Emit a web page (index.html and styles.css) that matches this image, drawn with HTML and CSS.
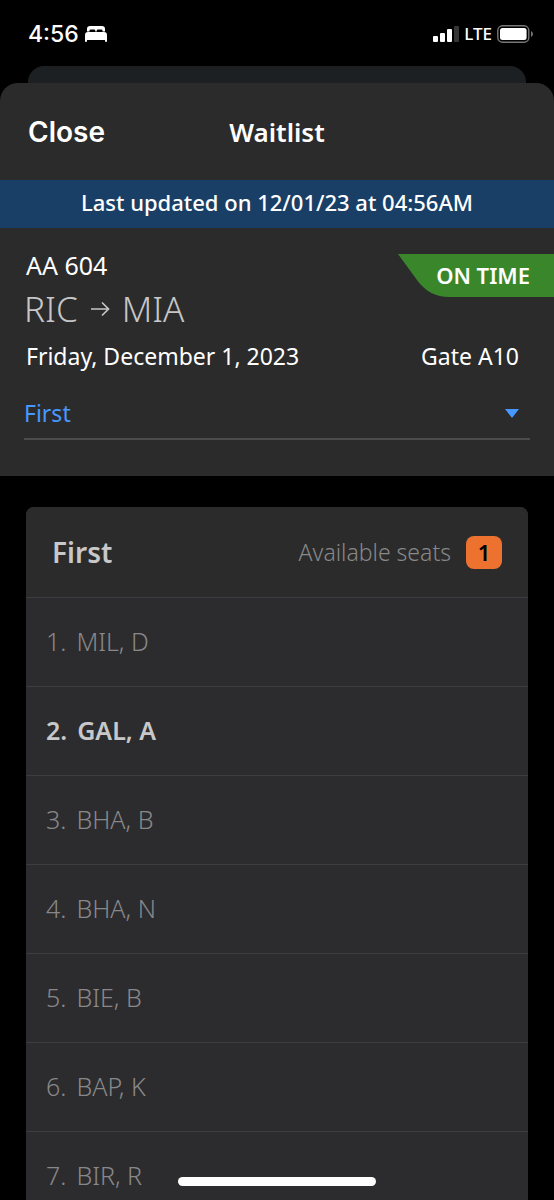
FILE: index.html
```html
<!DOCTYPE html>
<html lang="en">
<head>
<meta charset="utf-8">
<meta name="viewport" content="width=device-width, initial-scale=1">
<title>Waitlist</title>
<link rel="stylesheet" href="styles.css">
</head>
<body>
<div class="app">
  <div class="status-bar">
    <div class="status-group">
      <span class="clock">4:56</span>
      <svg class="bed" width="22" height="16" viewBox="0 0 22 16" aria-hidden="true"><path fill="#fff" d="M2 5.500V3Q2 0 5 0H17Q20 0 20 3V5.500H17.500V4.500Q17.500 3.500 16.500 3.500H13Q11.700 3.500 11.700 4.500V5.500H10.300V4.500Q10.300 3.500 9 3.500H5.500Q4.500 3.500 4.500 4.500V5.500ZM3 6H19Q22 6 22 9V15Q22 16 21 16Q20 16 20 15V14H2V15Q2 16 1 16Q0 16 0 15V9Q0 6 3 6Z"/></svg>
    </div>
    <div class="status-group status-right">
      <svg width="26" height="16" viewBox="0 0 26 16" aria-hidden="true"><g fill="#fff"><rect y="10" width="5" height="6" rx="1"/><rect x="7" y="7" width="5" height="9" rx="1"/><rect x="14" y="3" width="5" height="13" rx="1"/><rect x="21" width="5" height="16" rx="1" fill="#363636"/></g></svg>
      <span class="network">LTE</span>
      <svg width="36" height="18" viewBox="0 0 36 18" aria-hidden="true"><rect x=".8" y=".8" width="31" height="16.4" rx="4.8" fill="none" stroke="#777" stroke-width="1.4"/><rect x="3" y="3" width="26.6" height="12" rx="2.5" fill="#fff"/><path d="M34 6Q36 7 36 9T34 12Z" fill="#777"/></svg>
    </div>
  </div>
  <div class="sheet-behind"></div>
  <main class="sheet">
    <header class="sheet-header">
      <button class="close" type="button">Close</button>
      <h1 class="title">Waitlist</h1>
    </header>
    <p class="updated">Last updated on 12/01/23 at 04:56AM</p>
    <section class="flight">
      <div class="flight-top">
        <div>
          <p class="flight-number">AA 604</p>
          <p class="route"><span>RIC</span><svg width="20" height="16" viewBox="0 0 20 16" aria-label="to"><path d="M1 8H18M12 1.500L18.500 8L12 14.500" fill="none" stroke="#c6c6c6" stroke-width="1.7"/></svg><span>MIA</span></p>
        </div>
        <div class="flag">
          <svg class="flag-shape" aria-hidden="true"><path d="M0 0H800V43H52C37 43 27 37 19 26Z" fill="#3a872b"/></svg>
          <span class="flag-text">ON TIME</span>
        </div>
      </div>
      <div class="flight-info"><span>Friday, December 1, 2023</span><span>Gate A10</span></div>
      <div class="cabin">
        <select class="cabin-select" aria-label="Cabin"><option>First</option></select>
        <svg class="caret" width="14" height="9" viewBox="0 0 14 9" aria-hidden="true"><path d="M0 0H14L7 9Z" fill="#4798ff"/></svg>
      </div>
    </section>
    <section class="list-area">
      <div class="card">
        <div class="card-header">
          <h2 class="card-title">First</h2>
          <span class="seats-label">Available seats</span>
          <span class="seats">1</span>
        </div>
        <ul class="list">
          <li class="row"><span>1.</span><span>MIL, D</span></li>
          <li class="row row-current"><span>2.</span><span>GAL, A</span></li>
          <li class="row"><span>3.</span><span>BHA, B</span></li>
          <li class="row"><span>4.</span><span>BHA, N</span></li>
          <li class="row"><span>5.</span><span>BIE, B</span></li>
          <li class="row"><span>6.</span><span>BAP, K</span></li>
          <li class="row"><span>7.</span><span>BIR, R</span></li>
        </ul>
      </div>
    </section>
  </main>
  <div class="home-indicator"></div>
</div>
</body>
</html>
```
FILE: styles.css
```css
* { box-sizing: border-box; }
body {
  margin: 0;
  background: #000;
  color: #fff;
  font-family: "Noto Sans", "Open Sans", sans-serif;
  font-size: 23px;
  line-height: 32px;
}
h1, h2, p, ul { margin: 0; padding: 0; }
.app {
  display: flex;
  flex-direction: column;
  height: 100vh;
  overflow: hidden;
}
.status-bar {
  display: flex;
  flex: none;
  justify-content: space-between;
  align-items: center;
  height: 66px;
  padding: 2px 21px 0 28px;
}
.status-group { display: flex; align-items: center; gap: 6px; }
.status-right { gap: 5px; }
.clock { font: 500 23px/32px Inter, sans-serif; }
.network { font: 500 17px/32px "Noto Sans", sans-serif; }
.sheet-behind {
  flex: none;
  height: 17px;
  margin: 0 28px;
  border-radius: 16px 16px 0 0;
  background: #1d2023;
}
.sheet {
  display: flex;
  flex: 1;
  flex-direction: column;
  min-height: 0;
}
.sheet-header {
  display: grid;
  flex: none;
  grid-template-columns: 1fr auto 1fr;
  align-items: center;
  height: 97px;
  padding: 0 28px;
  border-radius: 18px 18px 0 0;
  background: #2b2b2b;
}
.close {
  justify-self: start;
  padding: 0;
  border: 0;
  background: none;
  color: #fff;
  font: 600 28px/32px Inter, sans-serif;
}
.title { font-size: 26px; font-weight: 600; }
.updated {
  flex: none;
  padding: 6px 16px 10px;
  background: #193f66;
  font-size: 22px;
  font-weight: 500;
  text-align: center;
}
.flight {
  flex: none;
  padding: 20px 24px 36px;
  background: #2b2b2b;
}
.flight-top { display: flex; justify-content: space-between; }
.flight-number { padding: 1px 2px 0; font-size: 25px; }
.route {
  display: flex;
  align-items: center;
  gap: 12px;
  padding: 6px 0;
  color: #c6c6c6;
  font-size: 35px;
  font-weight: 300;
  line-height: 44px;
}
.flag {
  display: grid;
  height: 43px;
  margin: 6px -24px 0 0;
}
.flag-shape, .flag-text { grid-area: 1 / 1; }
.flag-shape { width: 0; min-width: 100%; height: 43px; }
.flag-text {
  padding: 0 24px 0 38px;
  font-size: 22px;
  font-weight: 600;
  line-height: 43px;
  z-index: 1;
}
.flight-info {
  display: flex;
  justify-content: space-between;
  padding: 3px 11px 23px 2px;
}
.cabin {
  display: flex;
  align-items: center;
  padding-bottom: 7px;
  border-bottom: 2px solid #4c4c4c;
}
.cabin-select {
  flex: 1;
  height: 36px;
  padding: 0;
  border: 0;
  background: none;
  color: #4798ff;
  font: 23px/36px "Noto Sans", sans-serif;
  appearance: none;
}
.caret { margin-right: 11px; }
.list-area { padding: 31px 26px 0; }
.card {
  overflow: hidden;
  border-radius: 8px;
  background: #2c2c2e;
}
.card-header {
  display: flex;
  align-items: center;
  height: 90px;
  padding: 0 26px;
  background: #2b2b2b;
}
.card-title {
  flex: 1;
  color: #c8c8c8;
  font-size: 28px;
  font-weight: 600;
}
.seats-label { color: #888; font-weight: 300; }
.seats {
  width: 36px;
  margin-left: 15px;
  border-radius: 8px;
  background: #ed722f;
  color: #000;
  font-size: 22px;
  font-weight: 600;
  line-height: 33px;
  text-align: center;
}
.list { list-style: none; }
.row {
  display: flex;
  align-items: center;
  gap: 10px;
  height: 89px;
  padding: 0 20px 2px;
  border-top: 1px solid #3d3d3f;
  color: #88888a;
  font-size: 25px;
  font-weight: 300;
}
.row-current { color: #c8c8ca; font-weight: 600; }
.home-indicator {
  position: fixed;
  bottom: 14px;
  left: 50%;
  width: 198px;
  height: 9px;
  margin-left: -99px;
  border-radius: 5px;
  background: #fff;
}
```
